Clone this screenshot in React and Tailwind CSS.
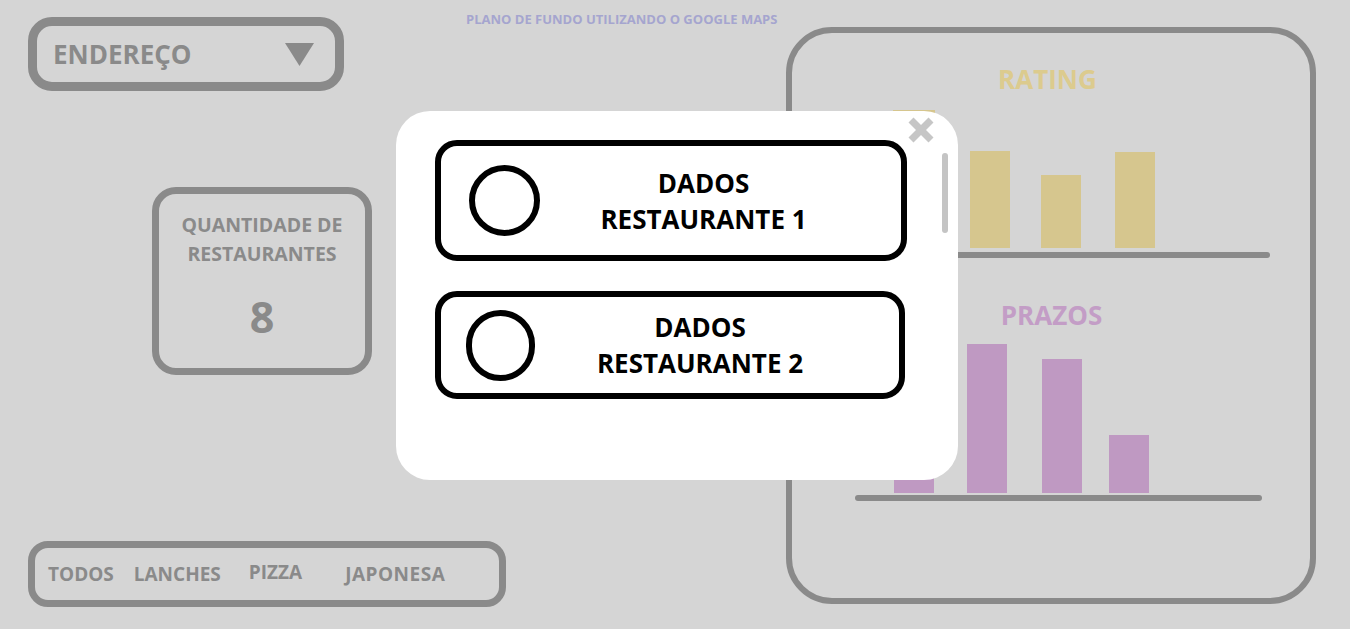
import React from "react";

const ratingBars = [
  { ml: "ml-[101px]", w: "w-[42px]", h: "h-[138px]" },
  { ml: "ml-[35px]", w: "w-[40px]", h: "h-[97px]" },
  { ml: "ml-[31px]", w: "w-[40px]", h: "h-[73px]" },
  { ml: "ml-[34px]", w: "w-[40px]", h: "h-[96px]" },
];

const prazoBars = [
  { ml: "ml-[102px]", w: "w-[40px]", h: "h-[112px]" },
  { ml: "ml-[33px]", w: "w-[40px]", h: "h-[149px]" },
  { ml: "ml-[35px]", w: "w-[40px]", h: "h-[134px]" },
  { ml: "ml-[27px]", w: "w-[40px]", h: "h-[58px]" },
];

const restaurantes = [
  { id: 1, card: "h-[121px] w-[472px]", circle: "ml-[28px] h-[71px] w-[71px]" },
  { id: 2, card: "h-[108px] w-[470px]", circle: "ml-[25px] h-[71px] w-[69px]" },
];

const App = () => {
  return (
    <div className="relative flex h-[629px] w-[1350px] overflow-hidden bg-[#d5d5d5] pl-[28px] font-['Open_Sans',sans-serif] font-bold">
      {/* Coluna esquerda */}
      <div className="flex w-[438px] shrink-0 flex-col items-start pt-[17px] pb-[22px]">
        {/* Endereço */}
        <div className="flex h-[74px] w-[316px] items-center justify-between rounded-[24px] border-[9px] border-[#8a8a8a] pr-[21px] pl-[16px]">
          <span className="text-[26px] leading-none text-[#8a8a8a]">ENDEREÇO</span>
          <svg width="29" height="23" viewBox="0 0 29 23">
            <polygon points="0,0 29,0 14.5,23" fill="#8a8a8a" />
          </svg>
        </div>

        {/* Quantidade */}
        <div className="mt-[96px] ml-[124px] flex h-[188px] w-[220px] flex-col items-center rounded-[24px] border-[7px] border-[#8a8a8a] pt-[16px]">
          <span className="text-center text-[19.5px] leading-[29px] whitespace-nowrap text-[#8a8a8a]">
            QUANTIDADE DE
            <br />
            RESTAURANTES
          </span>
          <span className="mt-[27px] text-[43px] leading-none text-[#8a8a8a]">8</span>
        </div>

        {/* Filtros */}
        <div className="mt-auto flex h-[66px] w-[478px] shrink-0 items-center rounded-[20px] border-[7px] border-[#8a8a8a] pl-[13px] text-[19px] leading-none whitespace-nowrap text-[#8a8a8a]">
          <span>TODOS</span>
          <span className="ml-[20px]">LANCHES</span>
          <span className="mb-[4px] ml-[28px]">PIZZA</span>
          <span className="ml-[43px] tracking-[0.5px]">JAPONESA</span>
        </div>
      </div>

      {/* Nota do mapa */}
      <div className="flex-1 pt-[6px] pr-[9px] text-center">
        <span className="text-[13px] leading-none whitespace-nowrap text-[#a5a5cf]">
          PLANO DE FUNDO UTILIZANDO O GOOGLE MAPS
        </span>
      </div>

      {/* Painel de gráficos */}
      <div className="mt-[27px] mr-[34px] flex h-[577px] w-[530px] shrink-0 flex-col rounded-[46px] border-[6px] border-[#8a8a8a]">
        <span className="mt-[33px] pr-[8px] text-center text-[26px] leading-none text-[#dccb8e]">RATING</span>
        <div className="mt-[18px] flex h-[138px] items-end">
          {ratingBars.map((b, i) => (
            <div key={i} className={`${b.ml} ${b.w} ${b.h} bg-[#d6c68e]`} />
          ))}
        </div>
        <div className="mt-[4px] ml-[66px] h-[6px] w-[412px] rounded-full bg-[#8a8a8a]" />

        <span className="mt-[44px] text-center text-[26px] leading-none text-[#c39dc6]">PRAZOS</span>
        <div className="mt-[16px] flex h-[149px] items-end">
          {prazoBars.map((b, i) => (
            <div key={i} className={`${b.ml} ${b.w} ${b.h} bg-[#bf99c2]`} />
          ))}
        </div>
        <div className="mt-[2px] ml-[63px] h-[6px] w-[407px] rounded-full bg-[#8a8a8a]" />
      </div>

      {/* Modal */}
      <div className="absolute top-[111px] left-[396px] flex h-[369px] w-[562px] flex-col gap-[30px] rounded-[34px] bg-white pt-[29px] pl-[39px]">
        <button className="absolute top-[6px] left-[512px]">
          <svg width="26" height="26" viewBox="0 0 26 26">
            <line x1="3" y1="3" x2="23" y2="23" stroke="#c6c6c6" strokeWidth="7" />
            <line x1="23" y1="3" x2="3" y2="23" stroke="#c6c6c6" strokeWidth="7" />
          </svg>
        </button>
        <div className="absolute top-[42px] left-[546px] h-[80px] w-[6px] rounded-full bg-[#c4c4c4]" />

        {restaurantes.map((r) => (
          <div
            key={r.id}
            className={`flex ${r.card} items-center rounded-[22px] border-[6px] border-black`}
          >
            <div className={`${r.circle} shrink-0 rounded-full border-[6px] border-black`} />
            <div className="flex-1 pr-[34px] text-center text-[26px] leading-[36px] text-black">
              DADOS
              <br />
              RESTAURANTE {r.id}
            </div>
          </div>
        ))}
      </div>
    </div>
  );
};

export default App;
